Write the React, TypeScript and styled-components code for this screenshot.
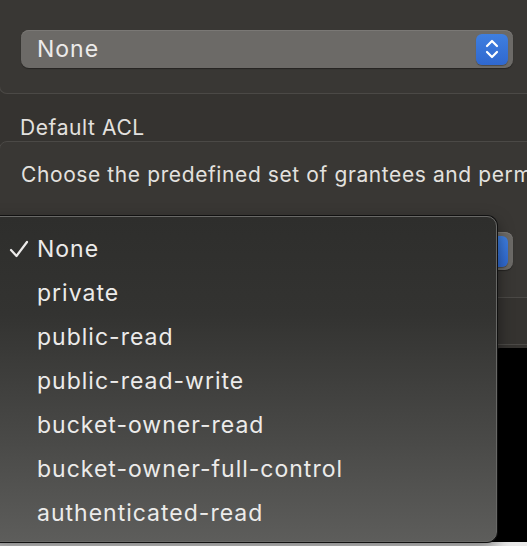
import React from "react";
import styled, { createGlobalStyle } from "styled-components";

const Global = createGlobalStyle`
  html, body { margin: 0; padding: 0; background: #353330; overflow: hidden; }
  body { font-family: Inter, "Noto Sans", sans-serif; -webkit-font-smoothing: antialiased; }
`;

const Page = styled.div`
  position: relative;
  width: 527px;
  height: 546px;
  overflow: hidden;
  background: #353330;
  color: #e6e4e2;
`;

const TopPanel = styled.div`
  margin-left: -1px;
  width: 560px;
  height: 94px;
  box-sizing: border-box;
  padding-top: 30px;
  padding-left: 21px;
  background: #393734;
  border: 1px solid #4b4946;
  border-top: none;
  border-bottom-left-radius: 8px;
`;

const Select = styled.div<{ $width: number }>`
  width: ${(p) => p.$width}px;
  height: 38px;
  box-sizing: border-box;
  border-radius: 8px;
  background: #6c6a67;
  box-shadow: inset 0 1px 0 #7a7875, 0 1px 1px rgba(0,0,0,0.35);
  display: flex;
  align-items: center;
  justify-content: space-between;
  padding: 0 5px 0 16px;
  font-size: 23px;
  letter-spacing: 1px;
  color: #ecebea;
`;

const Stepper = styled.div`
  width: 32px;
  height: 31px;
  border-radius: 6px;
  background: linear-gradient(#3f7fe0, #2f68cf);
  display: flex;
  align-items: center;
  justify-content: center;
  box-shadow: 0 1px 1px rgba(0,0,0,0.3);
`;

const Label = styled.div`
  padding: 20px 0 0 20px;
  height: 27px;
  font-size: 21px;
  letter-spacing: 0.6px;
  line-height: 27px;
  color: #e3e1df;
`;

const Panel = styled.div`
  margin-left: -1px;
  width: 560px;
  height: 157px;
  box-sizing: border-box;
  background: #393734;
  border: 1px solid #4b4946;
  border-top-left-radius: 8px;
  padding: 20px 0 0 21px;
  white-space: nowrap;
  overflow: hidden;
`;

const Description = styled.div`
  font-size: 21px;
  letter-spacing: 0.6px;
  line-height: 26px;
  color: #e3e1df;
`;

const PanelSelect = styled.div`
  margin-top: 44px;
`;

const Divider = styled.div`
  margin-top: 46px;
  height: 1px;
  background: #4b4946;
`;

const BlackWindow = styled.div`
  position: absolute;
  left: 490px;
  top: 348px;
  width: 60px;
  height: 210px;
  background: #000;
  border-top-left-radius: 10px;
`;

const BottomStrip = styled.div`
  position: absolute;
  left: 0;
  right: 0;
  bottom: 0;
  height: 4px;
  background: #e9e9e9;
`;

const Menu = styled.div`
  position: absolute;
  left: -12px;
  top: 216px;
  width: 509px;
  height: 326px;
  box-sizing: border-box;
  border-radius: 0 10px 10px 0;
  background: linear-gradient(#2e2e2c 0%, #333331 30%, #4a4a48 70%, #5d5d5b 100%);
  border: 1px solid #686866;
  box-shadow: 0 0 0 1px #111, 0 6px 16px rgba(0,0,0,0.5);
  padding-top: 10px;
`;

const Item = styled.div`
  height: 44px;
  display: flex;
  align-items: center;
  font-size: 23px;
  letter-spacing: 1px;
  color: #ecebea;
  padding-left: 20px;
`;

const CheckSlot = styled.span`
  width: 28px;
  display: flex;
  align-items: center;
`;

const Check = () => (
  <svg width="20" height="18" viewBox="0 0 20 18">
    <path d="M2 10 L7.5 16 L18 2" stroke="#ecebea" strokeWidth="2.2" fill="none" strokeLinecap="round" strokeLinejoin="round" />
  </svg>
);

const Chevrons = () => (
  <svg width="16" height="24" viewBox="0 0 16 24">
    <path d="M3 9 L8 4 L13 9" stroke="#fff" strokeWidth="2.2" fill="none" strokeLinecap="round" strokeLinejoin="round" />
    <path d="M3 15 L8 20 L13 15" stroke="#fff" strokeWidth="2.2" fill="none" strokeLinecap="round" strokeLinejoin="round" />
  </svg>
);

const options = [
  "None",
  "private",
  "public-read",
  "public-read-write",
  "bucket-owner-read",
  "bucket-owner-full-control",
  "authenticated-read",
];

export default function App() {
  return (
    <Page>
      <Global />
      <TopPanel>
        <Select $width={492}>
          <span>None</span>
          <Stepper><Chevrons /></Stepper>
        </Select>
      </TopPanel>
      <Label>Default ACL</Label>
      <Panel>
        <Description>Choose the predefined set of grantees and permissions</Description>
        <PanelSelect>
          <Select $width={492}>
            <span>None</span>
            <Stepper><Chevrons /></Stepper>
          </Select>
        </PanelSelect>
      </Panel>
      <Divider />
      <BlackWindow />
      <BottomStrip />
      <Menu>
        {options.map((o, i) => (
          <Item key={o}>
            <CheckSlot>{i === 0 ? <Check /> : null}</CheckSlot>
            {o}
          </Item>
        ))}
      </Menu>
    </Page>
  );
}
